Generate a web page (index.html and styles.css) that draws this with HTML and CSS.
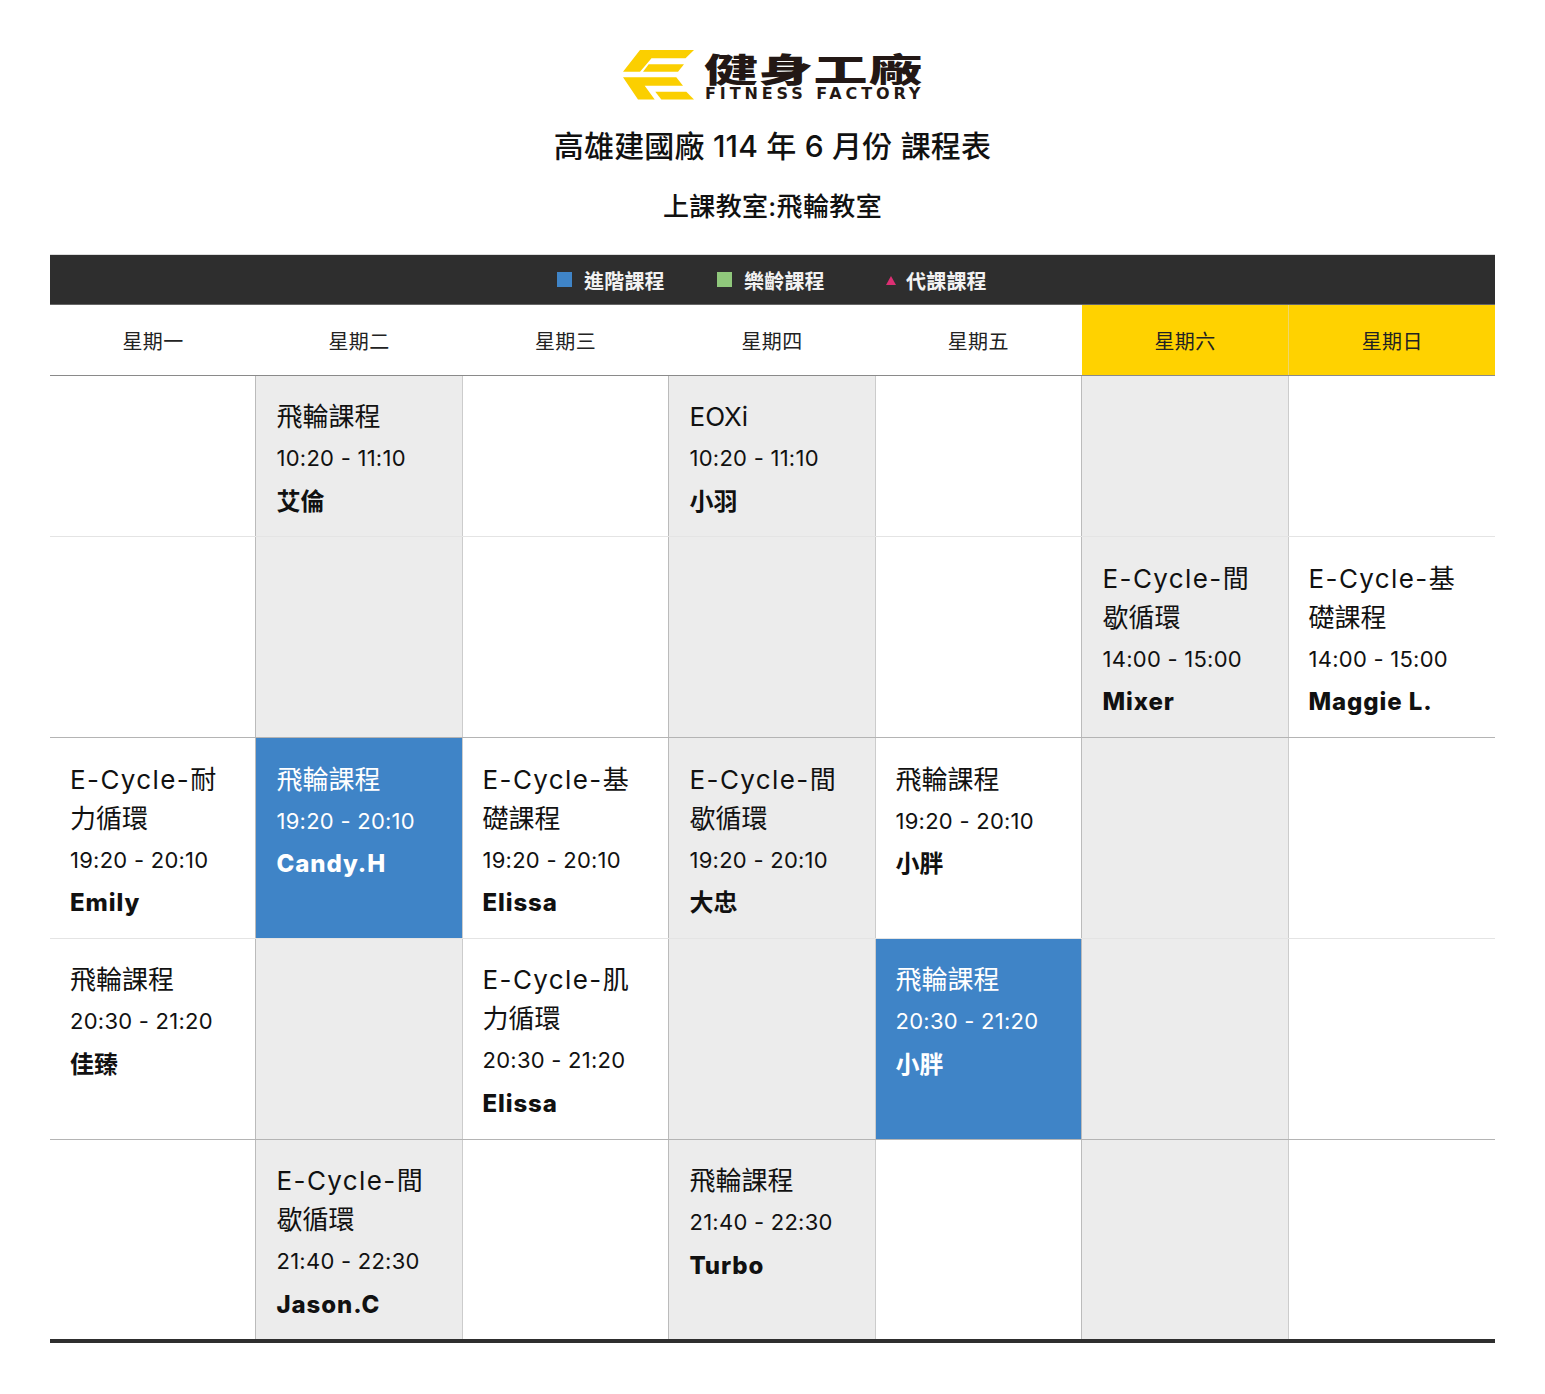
FILE: index.html
```html
<!DOCTYPE html>
<html lang="zh-Hant">
<head>
<meta charset="utf-8">
<title>課程表</title>
<link rel="stylesheet" href="styles.css">
</head>
<body>
<header class="head">
  <div class="logo">
    <svg class="logo-mark" width="72" height="50" viewBox="0 0 72 50">
      <path d="M17 0H71L62.500 8.300H28.500L17 21.700H0Z" fill="#fbcf00"/>
      <path d="M25.700 14.300H61L55 21.700H20Z" fill="#fbcf00"/>
      <path d="M0 27.300H53.300L60 35.700H21.700L31.700 49.500H15Z" fill="#fbcf00"/>
      <path d="M32.300 41.700H63.300L71 49.500H38.300Z" fill="#fbcf00"/>
    </svg>
    <div class="logo-text">
      <div class="logo-cn">健身工廠</div>
      <div class="logo-en">FITNESS FACTORY</div>
    </div>
  </div>
  <h1 class="title">高雄建國廠 114 年 6 月份 課程表</h1>
  <h2 class="subtitle">上課教室:飛輪教室</h2>
</header>
<div class="legend">
  <span class="lg lg-adv"><i class="sq sq-blue"></i>進階課程</span>
  <span class="lg lg-age"><i class="sq sq-green"></i>樂齡課程</span>
  <span class="lg lg-sub"><i class="tri"></i>代課課程</span>
</div>
<table class="sched">
  <thead>
    <tr><th>星期一</th><th>星期二</th><th>星期三</th><th>星期四</th><th>星期五</th><th class="we">星期六</th><th class="we">星期日</th></tr>
  </thead>
  <tbody>
    <tr class="r-light">
      <td></td>
      <td><div class="t">飛輪課程</div><div class="h">10:20 - 11:10</div><div class="n">艾倫</div></td>
      <td></td>
      <td><div class="t">EOXi</div><div class="h">10:20 - 11:10</div><div class="n">小羽</div></td>
      <td></td><td></td><td></td>
    </tr>
    <tr class="r-dark">
      <td></td><td></td><td></td><td></td><td></td>
      <td><div class="t"><span class="e">E-Cycle-</span>間<br>歇循環</div><div class="h">14:00 - 15:00</div><div class="n"><span class="e">Mixer</span></div></td>
      <td><div class="t"><span class="e">E-Cycle-</span>基<br>礎課程</div><div class="h">14:00 - 15:00</div><div class="n"><span class="e">Maggie L.</span></div></td>
    </tr>
    <tr class="r-light">
      <td><div class="t"><span class="e">E-Cycle-</span>耐<br>力循環</div><div class="h">19:20 - 20:10</div><div class="n"><span class="e">Emily</span></div></td>
      <td class="adv"><div class="t">飛輪課程</div><div class="h">19:20 - 20:10</div><div class="n"><span class="e">Candy.H</span></div></td>
      <td><div class="t"><span class="e">E-Cycle-</span>基<br>礎課程</div><div class="h">19:20 - 20:10</div><div class="n"><span class="e">Elissa</span></div></td>
      <td><div class="t"><span class="e">E-Cycle-</span>間<br>歇循環</div><div class="h">19:20 - 20:10</div><div class="n">大忠</div></td>
      <td><div class="t">飛輪課程</div><div class="h">19:20 - 20:10</div><div class="n">小胖</div></td>
      <td></td><td></td>
    </tr>
    <tr class="r-dark">
      <td><div class="t">飛輪課程</div><div class="h">20:30 - 21:20</div><div class="n">佳臻</div></td>
      <td></td>
      <td><div class="t"><span class="e">E-Cycle-</span>肌<br>力循環</div><div class="h">20:30 - 21:20</div><div class="n"><span class="e">Elissa</span></div></td>
      <td></td>
      <td class="adv"><div class="t">飛輪課程</div><div class="h">20:30 - 21:20</div><div class="n">小胖</div></td>
      <td></td><td></td>
    </tr>
    <tr class="r-last">
      <td></td>
      <td><div class="t"><span class="e">E-Cycle-</span>間<br>歇循環</div><div class="h">21:40 - 22:30</div><div class="n"><span class="e">Jason.C</span></div></td>
      <td></td>
      <td><div class="t">飛輪課程</div><div class="h">21:40 - 22:30</div><div class="n"><span class="e">Turbo</span></div></td>
      <td></td><td></td><td></td>
    </tr>
  </tbody>
</table>
</body>
</html>
```
FILE: styles.css
```css
* { box-sizing: border-box; }
html, body { margin: 0; padding: 0; background: #fff; }
body {
  padding: 50px 50px 0;
  height: 1394px;
  overflow: hidden;
  color: #111;
  font-family: "Inter", "Noto Sans CJK TC", sans-serif;
}
.head { text-align: center; }
.logo { display: flex; justify-content: center; gap: 9px; height: 50px; padding-left: 1px; }
.logo-mark { display: block; flex: none; }
.logo-text { width: 219px; height: 50px; text-align: left; }
.logo-cn {
  width: 219px; height: 35px; line-height: 35px;
  font-family: "Noto Sans CJK TC", sans-serif; font-weight: 900; font-size: 54px;
  color: #231815; letter-spacing: 0.8px; white-space: nowrap;
  transform: scaleY(0.62); transform-origin: 0 50%;
}
.logo-en {
  height: 14px; line-height: 14px; margin-top: 2px;
  font-family: "DejaVu Sans", sans-serif; font-weight: 700; font-size: 16px;
  color: #231815; white-space: nowrap; letter-spacing: 3.900px;
  padding-left: 1px;
}
.title { margin: 26px 0 0; font-size: 30px; font-weight: 500; line-height: 40px; color: #111; letter-spacing: 0.2px; }
.subtitle { margin: 21px 0 0; font-size: 26px; font-weight: 500; line-height: 40px; color: #111; letter-spacing: 0.35px; }

.legend {
  margin-top: 28px;
  height: 50px;
  background: #2e2e2e;
  border-bottom: 1px solid #666;
  box-shadow: 0 -1px 0 #ddd;
  display: flex;
  align-items: center;
  padding-left: 507px;
  padding-top: 2px;
  color: #f2f2f2;
  font-size: 20px;
  font-weight: 700;
  letter-spacing: 0.2px;
}
.lg { display: flex; align-items: center; }
.lg-adv { width: 160px; }
.lg-age { width: 169px; }
.sq { width: 15px; height: 15px; margin-right: 12px; margin-top: -3px; }
.sq-blue { background: #3f84c7; }
.sq-green { background: #8fc77b; }
.tri {
  width: 0; height: 0; margin-right: 10px;
  border-left: 5px solid transparent; border-right: 5px solid transparent;
  border-bottom: 9px solid #dc2f73;
}

.sched {
  width: 1445px;
  border-collapse: collapse;
  table-layout: fixed;
  border-bottom: 4px solid #2e2e2e;
}
.sched th {
  height: 70px;
  font-size: 20px;
  font-weight: 400;
  color: #222;
  letter-spacing: 0.3px;
  border-bottom: 1px solid #8a8a8a;
  padding: 1px 0 0 1px;
}
.sched th:nth-child(1) { width: 205px; }
.sched th:nth-child(2) { width: 207px; }
.sched th:nth-child(3) { width: 206px; }
.sched th:nth-child(4) { width: 207px; }
.sched th:nth-child(5) { width: 206px; }
.sched th:nth-child(6) { width: 207px; }
.sched th:nth-child(7) { width: 207px; }
.sched th.we { background: #ffd200; border-left: 1px solid #fff; }
.sched th.we + th.we { border-left: 1px solid #efd66b; }
.sched td {
  vertical-align: top;
  padding: 21.500px 20px 13.750px;
}
.sched td:nth-child(even) {
  padding-left: 21px;
  background: #ececec;
  border-left: 1px solid #bbb;
  border-right: 1px solid #ccc;
}
.sched td.adv { background: #3f84c7; color: #fff; }
.r-light td { border-bottom: 1px solid #e4e4e4; }
.r-dark td { border-bottom: 1px solid #b4b4b4; }
.t { font-size: 26px; line-height: 39px; }
.e { letter-spacing: 1.400px; }
.h { font-size: 22px; line-height: 40px; margin-top: 2px; letter-spacing: 0.25px; }
.n { font-size: 24px; line-height: 42px; font-weight: 700; margin-top: 2.500px; }
.n .e { font-weight: 800; letter-spacing: 0.9px; }
```
